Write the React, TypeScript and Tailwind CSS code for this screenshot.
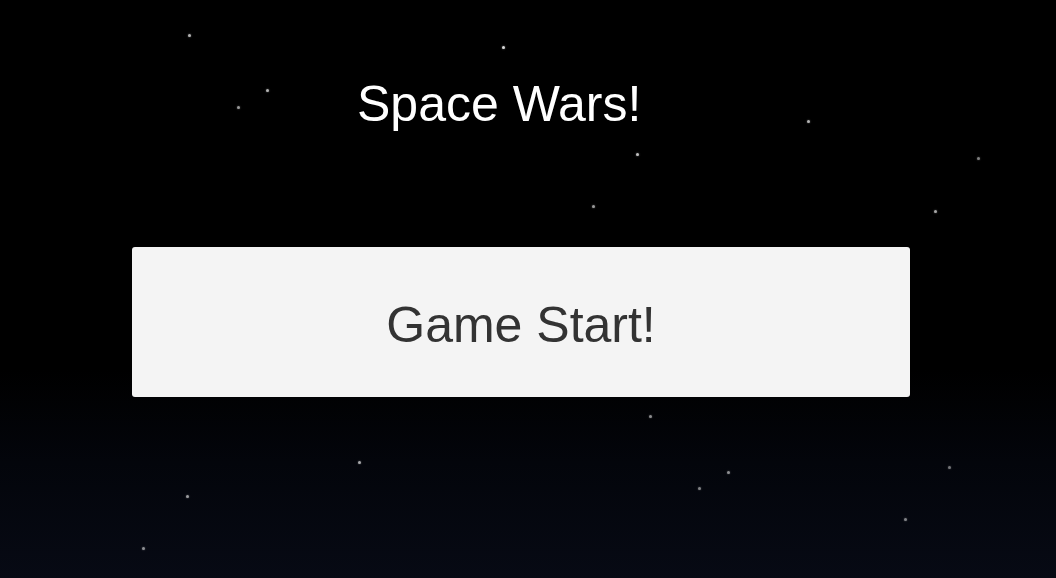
import React from "react";

// Background starfield: [x, y, opacity]
const stars: [number, number, number][] = [
  [189, 35, 0.7],
  [503, 47, 0.85],
  [267, 90, 0.7],
  [238, 107, 0.6],
  [808, 121, 0.7],
  [637, 154, 0.75],
  [978, 158, 0.5],
  [593, 206, 0.6],
  [935, 211, 0.65],
  [650, 416, 0.55],
  [359, 462, 0.65],
  [728, 472, 0.55],
  [949, 467, 0.45],
  [699, 488, 0.5],
  [187, 496, 0.6],
  [905, 519, 0.5],
  [143, 548, 0.55],
];

export default function App() {
  return (
    <div
      className="relative w-[1056px] h-[578px] overflow-hidden bg-[linear-gradient(to_bottom,#000000_0%,#000000_64%,#03050b_80%,#070a14_100%)]"
      style={{ fontFamily: '"Liberation Sans", Arial, sans-serif' }}
    >
      {stars.map(([x, y, o], i) => (
        <span
          key={i}
          className="absolute w-[3px] h-[3px] rounded-full bg-white shadow-[0_0_2px_rgba(255,255,255,0.6)]"
          style={{ left: x - 1.5, top: y - 1.5, opacity: o }}
        />
      ))}

      <div className="relative flex flex-col">
        <div className="pt-[74px] pl-[357px] h-[247px]">
          <h1 className="text-[50px] leading-[60px] text-white">Space Wars!</h1>
        </div>
        <div className="pl-[132px]">
          <button className="w-[778px] h-[150px] rounded-[3px] bg-[#f4f4f4] text-[#333333] text-[50px] leading-none flex items-center justify-center pt-[6px]">
            Game Start!
          </button>
        </div>
      </div>
    </div>
  );
}
